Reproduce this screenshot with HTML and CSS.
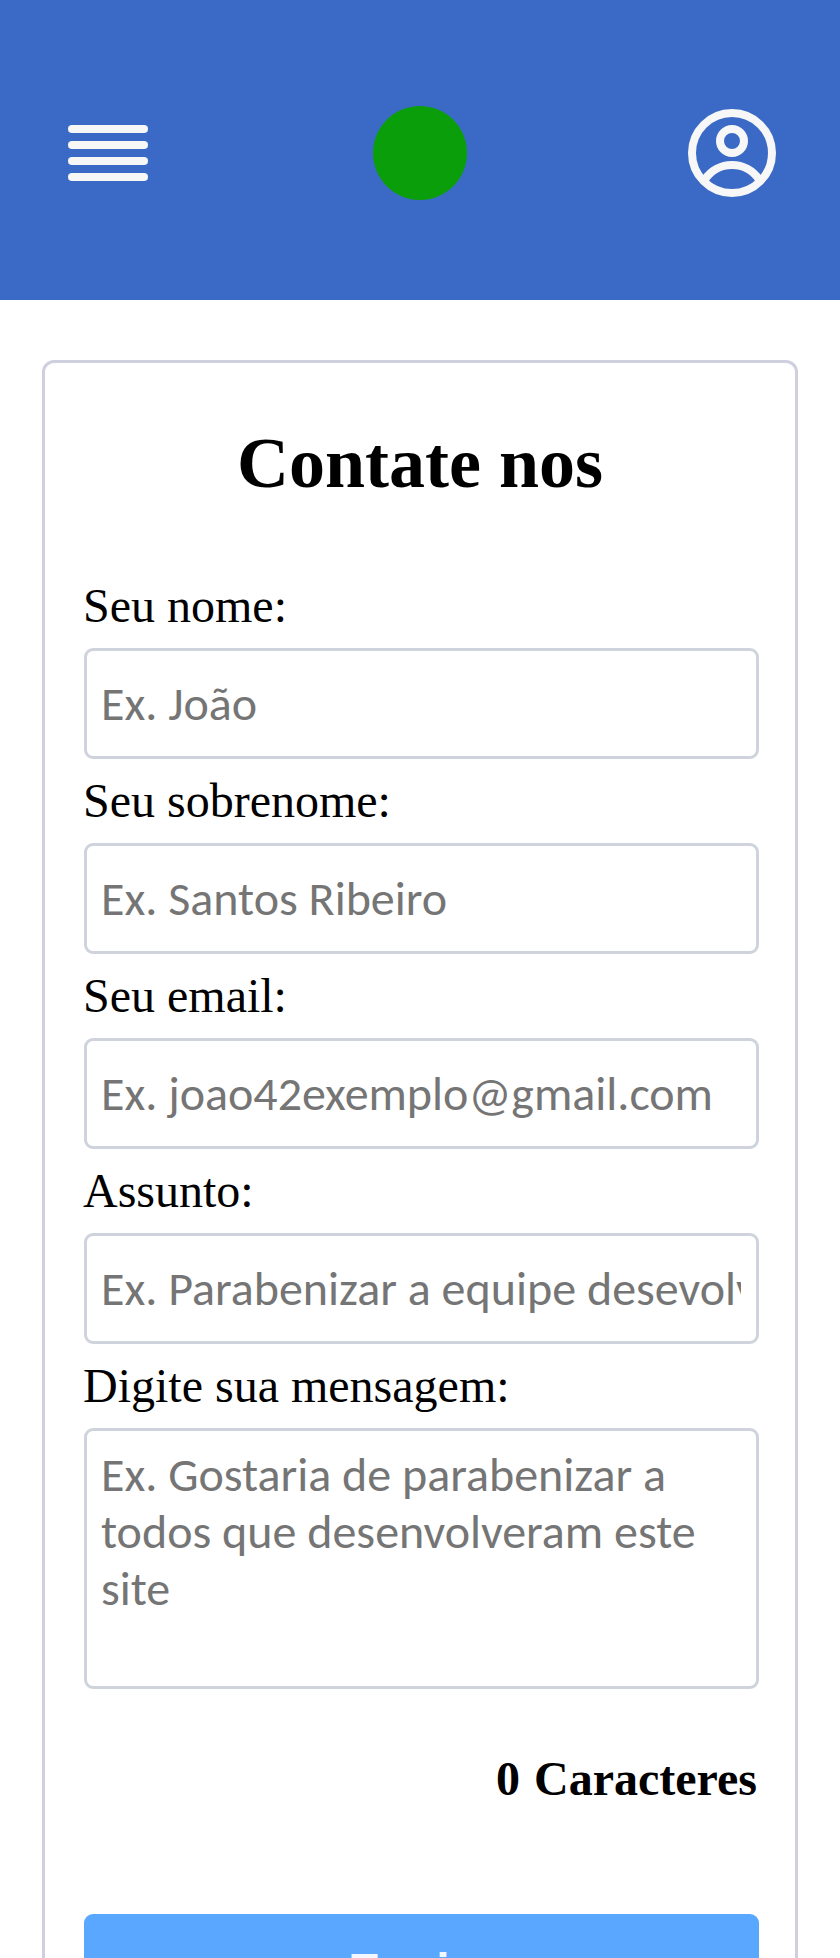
FILE: index.html
```
<!DOCTYPE html>
<html lang="pt-BR">
<head>
<meta charset="utf-8">
<title>Contate nos</title>
<link rel="stylesheet" href="styles.css">
</head>
<body>
<header class="header">
  <svg class="menu" viewBox="0 0 80 56" aria-label="Menu"><g fill="#f7f7f7"><rect width="80" height="8" rx="4"/><rect y="16" width="80" height="8" rx="4"/><rect y="32" width="80" height="8" rx="4"/><rect y="48" width="80" height="8" rx="4"/></g></svg>
  <div class="logo"></div>
  <svg class="user" viewBox="0 0 88 88" aria-label="Perfil"><g fill="none" stroke="#f7f7f7" stroke-width="8"><circle cx="44" cy="44" r="40"/><circle cx="44" cy="32" r="12"/><path d="M17 70.500C23 61.500 33 56 44 56s21 5.500 27 14.500"/></g></svg>
</header>
<main class="card">
  <h1 class="title">Contate nos</h1>
  <form class="form">
    <label class="label" for="nome">Seu nome:</label>
    <input class="field" id="nome" placeholder="Ex. João">
    <label class="label" for="sobrenome">Seu sobrenome:</label>
    <input class="field" id="sobrenome" placeholder="Ex. Santos Ribeiro">
    <label class="label" for="email">Seu email:</label>
    <input class="field" id="email" placeholder="Ex. joao42exemplo@gmail.com">
    <label class="label" for="assunto">Assunto:</label>
    <input class="field" id="assunto" placeholder="Ex. Parabenizar a equipe desevolvedora">
    <label class="label" for="mensagem">Digite sua mensagem:</label>
    <textarea class="field message" id="mensagem" placeholder="Ex. Gostaria de parabenizar a todos que desenvolveram este site"></textarea>
    <p class="counter">0 Caracteres</p>
    <button class="submit" type="button">Enviar</button>
  </form>
</main>
</body>
</html>
```
FILE: styles.css
```
* { box-sizing: border-box; }
html { overflow: hidden; }
body { margin: 0; height: 1958px; overflow: hidden; background: #fff; color: #000; font-family: "Liberation Serif", serif; font-size: 48px; }
.header { height: 300px; padding: 6px 64px 0 68px; display: flex; align-items: center; justify-content: space-between; background: #3b6ac6; }
.menu { width: 80px; height: 56px; display: block; }
.logo { width: 94px; height: 94px; margin-left: 4px; border-radius: 50%; background: #0a9e0a; }
.user { width: 88px; height: 88px; display: block; }
.card { margin: 60px 42px 0; height: 1760px; padding: 60px 36px 0 39px; border: 3px solid #cfcfdf; border-radius: 12px; }
.title { margin: 0 3px 0 0; height: 81px; line-height: 81px; font-size: 72px; text-align: center; }
.form { margin-top: 72px; display: flex; flex-direction: column; }
.label { height: 72px; line-height: 60px; margin-left: -1px; }
.label:not(:first-child) { height: 84px; padding-top: 12px; }
.field { width: 675px; height: 111px; margin: 0; padding: 3px 15px 3px 14px; border: 3px solid #cfd4dc; border-radius: 9px; background: #fff; outline: 0; font-family: Calibri, Carlito, "Open Sans", sans-serif; font-size: 48px; }
.field::placeholder { color: #757575; opacity: 1; }
.message { display: block; height: 261px; padding: 15px 15px 15px 14px; line-height: 57px; resize: none; overflow: hidden; }
.counter { margin: 60px 2px 0 0; height: 60px; line-height: 60px; font-weight: bold; text-align: right; word-spacing: 2px; }
.submit { width: 675px; height: 114px; margin-top: 105px; padding: 0; border: 0; border-radius: 9px; background: #59a7ff; color: #f2f7ff; font: bold 48px/114px "Liberation Sans", sans-serif; }
```
